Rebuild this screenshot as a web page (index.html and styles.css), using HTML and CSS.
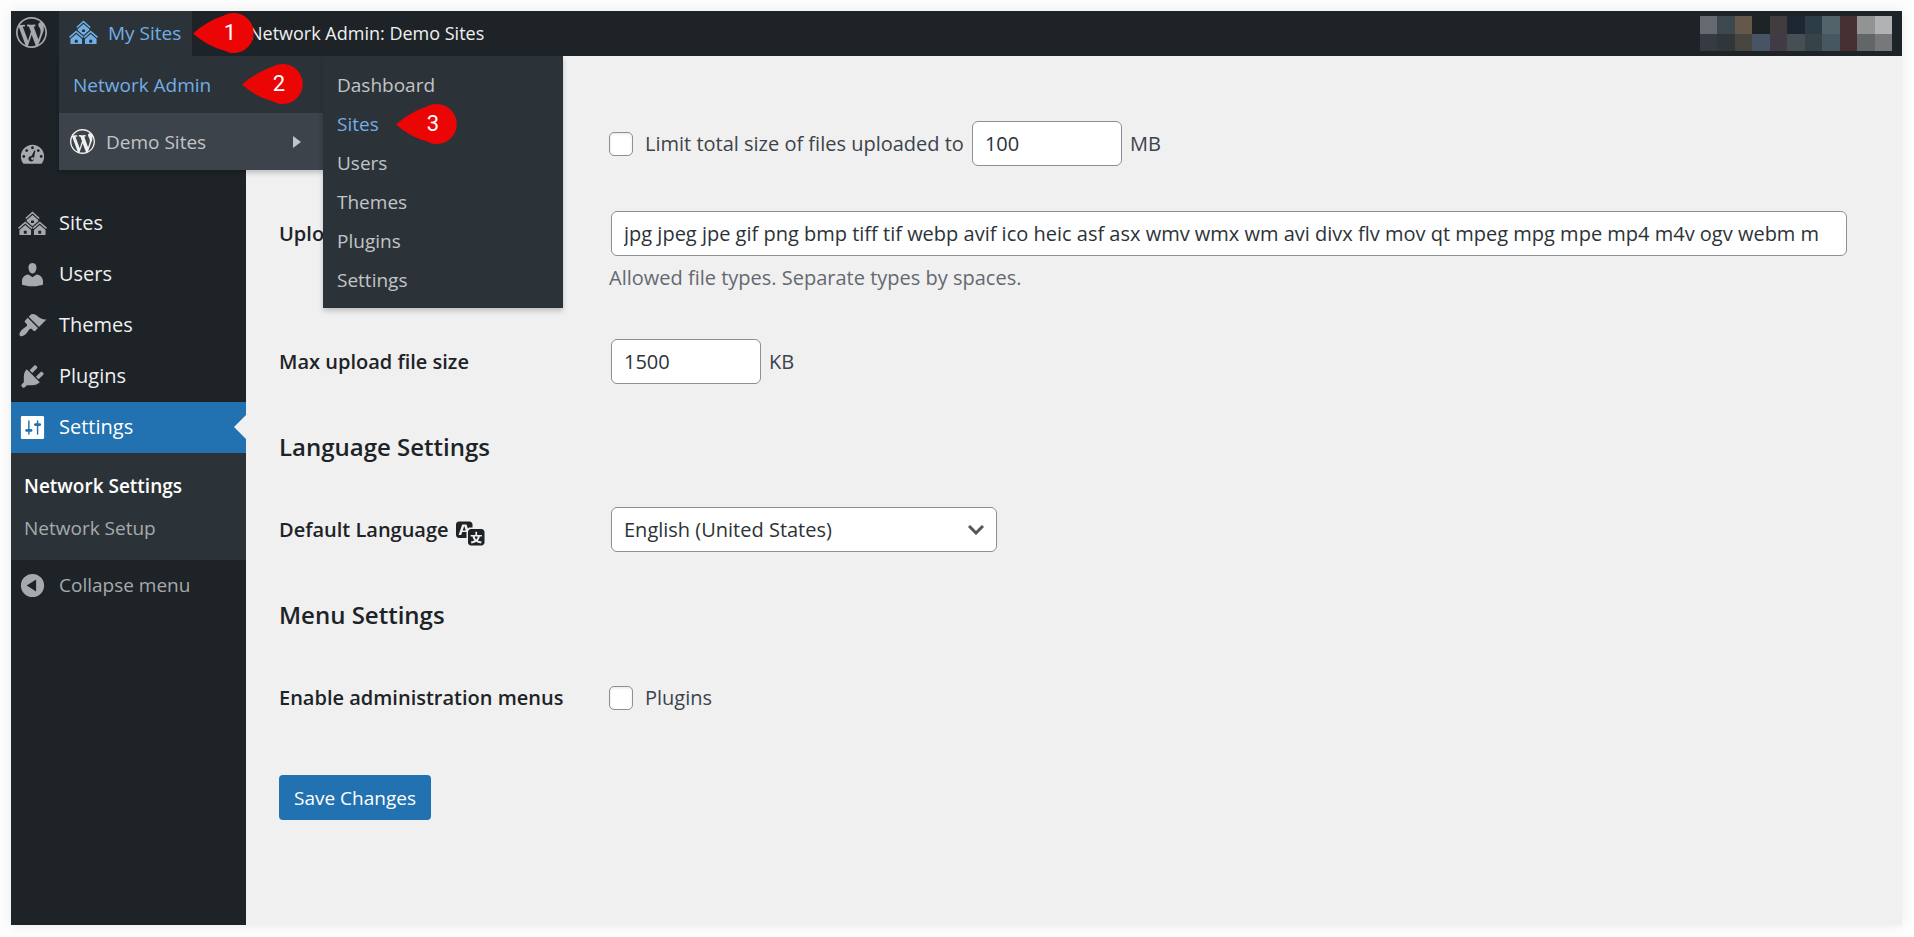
FILE: index.html
```
<!DOCTYPE html>
<html lang="en">
<head>
<meta charset="utf-8">
<title>Network Settings</title>
<link rel="stylesheet" href="styles.css">
</head>
<body>
<svg class="defs" aria-hidden="true">
  <symbol id="i-wp" viewBox="0 0 20 20"><path d="M20 10c0-5.510-4.490-10-10-10C4.480 0 0 4.490 0 10c0 5.520 4.480 10 10 10 5.510 0 10-4.480 10-10zM7.780 15.370L4.370 6.220c.550-.020 1.170-.080 1.170-.080.500-.060.440-1.130-.060-1.110 0 0-1.450.110-2.370.110-.180 0-.370 0-.580-.010C4.120 2.690 6.870 1.110 10 1.110c2.330 0 4.450.870 6.050 2.340-.680-.110-1.650.390-1.650 1.580 0 .740.450 1.360.900 2.100.350.610.550 1.360.550 2.460 0 1.490-1.400 5-1.400 5l-3.030-8.370c.540-.020.820-.170.820-.170.500-.050.440-1.250-.060-1.220 0 0-1.440.120-2.380.120-.870 0-2.330-.120-2.330-.120-.500-.030-.560 1.200-.060 1.220l.920.080 1.260 3.410zM17.410 10c.240-.640.740-1.870.430-4.250.700 1.290 1.050 2.710 1.050 4.250 0 3.290-1.730 6.240-4.400 7.780.970-2.590 1.940-5.200 2.920-7.780zM6.100 18.090C3.120 16.650 1.110 13.530 1.110 10c0-1.300.230-2.480.720-3.590C3.250 10.300 4.670 14.200 6.100 18.090zm4.030-6.630l2.580 6.980c-.860.290-1.760.450-2.710.450-.790 0-1.570-.110-2.290-.330.810-2.380 1.620-4.740 2.420-7.100z"/></symbol>
  <symbol id="i-sites" viewBox="0 0 20 20"><path d="M14.270 6.870L10 3.140 5.730 6.870 5 6.140l5-4.380 5 4.380zM14 8.420l-4.050 3.430L6 8.380v-.740l4-3.500 4 3.500v.780zM11 9.700V8H9v1.700h2zm-1.730 4.030L5 10 .730 13.730 0 13l5-4.380L10 13zm10 0L15 10l-4.270 3.730L10 13l5-4.380L20 13zM5 11l4 3.500V18H1v-3.500zm10 0l4 3.500V18h-8v-3.500zm-9 6v-2H4v2h2zm10 0v-2h-2v2h2z"/></symbol>
  <symbol id="i-dash" viewBox="0 0 20 20"><path d="M3.760 17h12.480c1.100-1.370 1.760-3.110 1.760-5 0-4.420-3.580-8-8-8s-8 3.580-8 8c0 1.890.660 3.630 1.760 5zM10 5c.550 0 1 .450 1 1s-.450 1-1 1-1-.450-1-1 .450-1 1-1zM6 7c.550 0 1 .450 1 1s-.450 1-1 1-1-.450-1-1 .450-1 1-1zm8 0c.550 0 1 .450 1 1s-.450 1-1 1-1-.450-1-1 .450-1 1-1zm-2.630.750l.630.370-1 5.140c.030.100 0 .240 0 .340 0 1.050-.860 1.900-1.920 1.900-1.050 0-1.900-.850-1.900-1.900s.850-1.900 1.900-1.900h.200zM4 11c.550 0 1 .450 1 1s-.450 1-1 1-1-.450-1-1 .450-1 1-1zm12 0c.550 0 1 .450 1 1s-.450 1-1 1-1-.450-1-1 .450-1 1-1zm-6 3.500c.550 0 1-.450 1-1s-.450-1-1-1-1 .450-1 1 .450 1 1 1z"/></symbol>
  <symbol id="i-user" viewBox="0 0 20 20"><path d="M10 9.250c-2.270 0-2.730-3.440-2.730-3.440C7 4.020 7.820 2 9.970 2c2.160 0 2.980 2.020 2.710 3.810 0 0-.410 3.440-2.680 3.440zm0 2.570L12.720 10c2.390 0 4.520 2.330 4.520 4.530v2.490s-3.650 1.130-7.240 1.130c-3.650 0-7.240-1.130-7.240-1.130v-2.490c0-2.250 1.940-4.480 4.470-4.480z"/></symbol>
  <symbol id="i-theme" viewBox="0 0 20 20"><path d="M14.480 11.060L7.410 3.990l1.500-1.500c.500-.560 2.300-.470 3.510.320 1.210.800 1.430 1.280 2.910 2.100 1.180.640 2.450 1.260 4.450.850zm-.710.710L6.700 4.700 4.930 6.470c-.390.390-.390 1.020 0 1.410l1.060 1.060c.390.390.390 1.030 0 1.420-.600.600-1.430 1.110-2.210 1.690-.350.260-.700.530-1.010.840C1.430 14.230.400 16.080 1.400 17.070c.990 1 2.840-.030 4.180-1.360.310-.310.580-.660.850-1.020.570-.780 1.080-1.610 1.690-2.210.390-.390 1.020-.390 1.410 0l1.060 1.060c.390.390 1.020.390 1.410 0z"/></symbol>
  <symbol id="i-plug" viewBox="0 0 20 20"><path d="M13.110 4.360L9.870 7.600 8 5.730l3.240-3.240c.350-.340 1.050-.200 1.560.320.520.510.660 1.210.310 1.550zm-8 1.770l.910-1.120 9.010 9.010-1.190.840c-.710.710-2.630 1.160-3.820 1.160H6.140L4.900 17.260c-.590.590-1.540.590-2.120 0-.590-.580-.590-1.530 0-2.120l1.240-1.240v-3.880c0-1.130.400-3.190 1.090-3.890zm7.260 3.970l3.240-3.240c.340-.350 1.040-.210 1.550.310.520.510.660 1.210.310 1.550l-3.240 3.250z"/></symbol>
  <symbol id="i-set" viewBox="0 0 20 20"><path d="M18 17V3c0-.600-.400-1-1-1H3c-.600 0-1 .400-1 1v14c0 .600.400 1 1 1h14c.600 0 1-.400 1-1zM8 11h1c.550 0 1 .450 1 1s-.450 1-1 1H8v1.500c0 .280-.220.500-.500.500s-.500-.220-.500-.500V13H6c-.550 0-1-.450-1-1s.450-1 1-1h1V5.500c0-.280.220-.500.500-.500s.500.220.500.500V11zm5-2h-1c-.550 0-1-.450-1-1s.450-1 1-1h1V5.500c0-.280.220-.500.500-.500s.500.220.500.500V7h1c.550 0 1 .450 1 1s-.450 1-1 1h-1v5.500c0 .280-.220.500-.500.500s-.500-.220-.500-.500V9z"/></symbol>
  <symbol id="i-collapse" viewBox="0 0 20 20"><path fill-rule="evenodd" d="M10 2a8 8 0 1 0 0 16 8 8 0 0 0 0-16zM12.500 5.800v8.400L6 10z"/></symbol>
  <symbol id="i-lang" viewBox="0 0 20 20"><path fill-rule="evenodd" d="M11 7H9.490c-.630 0-1.250.300-1.590.700L7 5H4.130l-2.390 7h1.690l.740-2H7v4H2c-1.100 0-2-.900-2-2V5c0-1.100.900-2 2-2h7c1.100 0 2 .900 2 2v2zM6.510 9H4.490l1-2.930zM10 8h7c1.100 0 2 .900 2 2v7c0 1.100-.900 2-2 2h-7c-1.100 0-2-.900-2-2v-7c0-1.100.900-2 2-2zm7.250 5v-1.080h-3.170V9.750h-1.160v2.170H9.750V13h1.280c.110.850.560 1.850 1.280 2.620-.870.360-1.890.620-2.310.620-.010.020.220.970.200 1.460.840 0 2.210-.500 3.280-1.150 1.090.650 2.480 1.150 3.340 1.150-.020-.490.200-1.440.200-1.460-.430 0-1.490-.270-2.380-.630.700-.770 1.140-1.770 1.250-2.610h1.360zm-3.810 1.930c-.500-.460-.850-1.130-1.010-1.930h2.090c-.170.800-.510 1.470-1 1.930z"/></symbol>
  <symbol id="i-pin" viewBox="0 0 62 40"><path d="M0 20.500Q14 8 31 2.500A20 20 0 1 1 31 37.500Q14 33 0 20.500z"/></symbol>
</svg>

<div class="frame">
  <header class="bar">
    <a class="bar-logo" href="#" aria-label="About WordPress"><svg class="logo"><use href="#i-wp"/></svg></a>
    <div class="mysites">
      <a class="mysites-link" href="#"><svg class="icon"><use href="#i-sites"/></svg>My Sites</a>
      <span class="pin pin-1"><svg><use href="#i-pin"/></svg><b>1</b></span>
      <div class="drop">
        <div class="drop-row">
          <a href="#" class="drop-link is-active">Network Admin</a>
          <span class="pin pin-2"><svg><use href="#i-pin"/></svg><b>2</b></span>
        </div>
        <div class="drop-row is-site">
          <a href="#" class="drop-link"><svg class="blavatar"><use href="#i-wp"/></svg>Demo Sites<svg class="caret" viewBox="0 0 8 12"><path d="M0 0l8 6-8 6z"/></svg></a>
        </div>
        <ul class="fly">
          <li><a href="#">Dashboard</a></li>
          <li><a href="#" class="is-active">Sites</a><span class="pin pin-3"><svg><use href="#i-pin"/></svg><b>3</b></span></li>
          <li><a href="#">Users</a></li>
          <li><a href="#">Themes</a></li>
          <li><a href="#">Plugins</a></li>
          <li><a href="#">Settings</a></li>
        </ul>
      </div>
    </div>
    <a class="bar-title" href="#">Network Admin: Demo Sites</a>
    <svg class="mosaic" viewBox="0 0 11 2" preserveAspectRatio="none" shape-rendering="crispEdges" aria-hidden="true">
      <path fill="#656970" d="M0 0h1v1H0z"/><path fill="#3c474e" d="M1 0h1v1H1z"/><path fill="#64584a" d="M2 0h1v1H2z"/><path fill="#1d2324" d="M3 0h1v1H3z"/><path fill="#413c3d" d="M4 0h1v1H4z"/><path fill="#1c2733" d="M5 0h1v1H5z"/><path fill="#2e3d45" d="M6 0h1v1H6z"/><path fill="#526469" d="M7 0h1v1H7z"/><path fill="#463033" d="M8 0h1v2H8z"/><path fill="#929393" d="M9 0h1v1H9z"/><path fill="#b1b2b4" d="M10 0h1v1h-1z"/>
      <path fill="#363b43" d="M0 1h1v1H0z"/><path fill="#30363a" d="M1 1h1v1H1z"/><path fill="#47453f" d="M2 1h1v1H2z"/><path fill="#465463" d="M3 1h1v1H3z"/><path fill="#423b45" d="M4 1h1v1H4z"/><path fill="#464f53" d="M5 1h1v1H5z"/><path fill="#36444a" d="M6 1h1v1H6z"/><path fill="#465760" d="M7 1h1v1H7z"/><path fill="#636667" d="M9 1h1v1H9z"/><path fill="#76787b" d="M10 1h1v1h-1z"/>
    </svg>
  </header>
  <div class="body">
    <nav class="side">
      <a class="item item-dash" href="#" aria-label="Dashboard"><svg class="icon"><use href="#i-dash"/></svg></a>
      <a class="item" href="#"><svg class="icon"><use href="#i-sites"/></svg>Sites</a>
      <a class="item" href="#"><svg class="icon"><use href="#i-user"/></svg>Users</a>
      <a class="item" href="#"><svg class="icon"><use href="#i-theme"/></svg>Themes</a>
      <a class="item" href="#"><svg class="icon"><use href="#i-plug"/></svg>Plugins</a>
      <a class="item is-current" href="#"><svg class="icon"><use href="#i-set"/></svg>Settings</a>
      <div class="sub">
        <a href="#" class="is-current">Network Settings</a>
        <a href="#">Network Setup</a>
      </div>
      <button type="button" class="item collapse"><svg class="icon"><use href="#i-collapse"/></svg>Collapse menu</button>
    </nav>
    <main class="main">
      <form>
        <div class="row first">
          <div class="label"></div>
          <div class="field quota">
            <input type="checkbox" id="limit" class="check"><label for="limit">Limit total size of files uploaded to</label>
            <input type="text" class="text short" value="100" aria-label="Size in megabytes"><span>MB</span>
          </div>
        </div>
        <div class="row">
          <label class="label" for="types">Upload file types</label>
          <div class="field">
            <div class="inset"><input type="text" id="types" class="text" value="jpg jpeg jpe gif png bmp tiff tif webp avif ico heic asf asx wmv wmx wm avi divx flv mov qt mpeg mpg mpe mp4 m4v ogv webm m"></div>
            <p class="hint">Allowed file types. Separate types by spaces.</p>
          </div>
        </div>
        <div class="row">
          <label class="label" for="max">Max upload file size</label>
          <div class="field inset"><input type="text" id="max" class="text short" value="1500"><span>KB</span></div>
        </div>
        <h2>Language Settings</h2>
        <div class="row">
          <label class="label" for="lang">Default Language <svg class="lang"><use href="#i-lang"/></svg></label>
          <div class="field inset">
            <span class="select"><select id="lang"><option>English (United States)</option></select><svg viewBox="0 0 16 10"><path d="M1 1l7 7 7-7"/></svg></span>
          </div>
        </div>
        <h2>Menu Settings</h2>
        <div class="row last">
          <div class="label">Enable administration menus</div>
          <div class="field"><input type="checkbox" id="plugins" class="check"><label for="plugins">Plugins</label></div>
        </div>
        <button type="submit" class="save">Save Changes</button>
      </form>
    </main>
  </div>
</div>
</body>
</html>
```
FILE: styles.css
```
* { box-sizing: border-box; }

body {
  margin: 0;
  min-height: 100vh;
  display: flex;
  padding: 11px 12px 12px 11px;
  background: #fdfdfd;
  color: #3c434a;
  font-family: "Segoe UI", "Open Sans", "Noto Sans", sans-serif;
  font-size: 19px;
  line-height: 28px;
}

a { color: inherit; text-decoration: none; }
svg { display: block; fill: currentColor; flex: none; }
ul { list-style: none; margin: 0; padding: 0; }
input, select, button { font: inherit; color: inherit; margin: 0; }
.defs { position: absolute; width: 0; height: 0; }

.frame {
  flex: 1;
  min-width: 0;
  display: flex;
  flex-direction: column;
  background: #f0f0f0;
  box-shadow: 0 0 12px rgba(0, 0, 0, 0.08);
}

.bar {
  display: flex;
  align-items: center;
  height: 45px;
  padding-right: 10px;
  background: #1d2327;
  color: #f0f0f1;
}
.bar-logo { width: 48px; padding: 0 0 2px 5px; color: #a7aaad; }
.logo { width: 31px; height: 31px; }
.icon { width: 29px; height: 29px; }
.mysites { position: relative; }
.mysites-link {
  display: flex;
  align-items: center;
  gap: 10px;
  height: 45px;
  width: 133px;
  padding: 0 0 2px 10px;
  background: #2c3338;
  color: #72aee6;
  white-space: nowrap;
}
.bar-title { margin-left: 57px; padding-bottom: 2px; font-size: 18px; white-space: nowrap; }
.mosaic { width: 192px; height: 35px; margin-left: auto; }

.drop {
  position: absolute;
  z-index: 2;
  top: 100%;
  left: 0;
  width: 264px;
  background: #2c3338;
  color: #c3c4c7;
  box-shadow: 0 3px 5px rgba(0, 0, 0, 0.2);
}
.drop-row { position: relative; height: 57px; }
.drop-row.is-site { background: #3c434a; }
.drop-link { display: flex; align-items: center; height: 100%; padding: 0 22px 0 14px; }
.is-site .drop-link { padding-left: 11px; }
.is-active { color: #72aee6; }
.blavatar { width: 25px; height: 25px; margin-right: 11px; color: #f0f0f1; }
.caret { width: 8px; height: 12px; margin-left: auto; }
.fly {
  position: absolute;
  top: 0;
  left: 100%;
  width: 240px;
  padding: 10px 0 8px;
  background: #2c3338;
  box-shadow: 0 3px 5px rgba(0, 0, 0, 0.2);
}
.fly li { position: relative; }
.fly a { display: block; padding: 0 14px; line-height: 39px; }

.pin { position: absolute; z-index: 3; width: 62px; height: 40px; color: #eb0505; }
.pin svg { width: 62px; height: 40px; }
.pin b {
  position: absolute;
  inset: 0 0 0 12px;
  color: #fff;
  font-family: Roboto, sans-serif;
  font-weight: 400;
  font-size: 22px;
  line-height: 40px;
  text-align: center;
}
.pin-1 { top: 2px; left: 134px; }
.pin-2 { top: 8px; left: 183px; }
.pin-3 { top: -1px; left: 73px; }

.body { flex: 1; display: flex; }
.side { flex: none; width: 235px; padding-top: 72px; background: #1d2327; color: #f0f0f1; }
.item {
  position: relative;
  display: flex;
  align-items: center;
  gap: 12px;
  width: 100%;
  height: 51px;
  padding: 0 8px 1px 7px;
  font-size: 20px;
}
.item .icon { color: #a7aaad; }
.item-dash { margin-bottom: 19px; }
.item.is-current { background: #2271b1; color: #fff; }
.item.is-current .icon { color: #fff; }
.item.is-current::after {
  content: "";
  position: absolute;
  right: 0;
  top: 13px;
  border: 12px solid transparent;
  border-left-width: 0;
  border-right-color: #f0f0f0;
}
.sub { padding: 12px 13px 11px; background: #2c3338; color: #a7aaad; }
.sub a { display: block; line-height: 42px; }
.sub .is-current { color: #fff; font-weight: 600; }
.item.collapse { border: 0; background: none; color: #a7aaad; font-size: 19px; text-align: left; }

.main { flex: 1; min-width: 0; padding: 65px 55px 20px 33px; font-size: 20px; }
.row { display: flex; margin-bottom: 47px; min-height: 45px; }
.row.first { margin-bottom: 45px; }
.row.last { margin-bottom: 55px; }
.label { flex: none; width: 330px; line-height: 45px; color: #1d2327; font-weight: 600; }
.lang { display: inline-block; width: 30px; height: 30px; margin-left: 2px; vertical-align: middle; }
.field { flex: 1; min-width: 0; min-height: 45px; display: flex; flex-wrap: wrap; align-items: center; }
.inset { padding-left: 2px; }
div.inset:not(.field) { width: 100%; }
.check {
  appearance: none;
  width: 24px;
  height: 24px;
  margin-right: 12px;
  border: 1px solid #8c8f94;
  border-radius: 5px;
  background: #fff;
  box-shadow: inset 0 1px 3px rgba(0, 0, 0, 0.1);
}
.text, .select select {
  display: block;
  width: 100%;
  height: 45px;
  padding: 0 12px;
  border: 1px solid #8c8f94;
  border-radius: 6px;
  background: #fff;
  color: #2c3338;
}
.text.short { width: 150px; margin-right: 8px; }
.quota .short { margin-left: 8px; }
.hint { margin: 8px 0 0; color: #646970; }
.select { position: relative; width: 386px; }
.select select { appearance: none; }
.select svg { position: absolute; right: 13px; top: 18px; width: 16px; height: 10px; fill: none; stroke: #50575e; stroke-width: 3; pointer-events: none; }
h2 { margin: 0 0 44px; color: #1d2327; font-size: 24px; line-height: 32px; font-weight: 600; }
.save {
  height: 45px;
  padding: 0 15px;
  border: 0;
  border-radius: 4px;
  background: #2271b1;
  color: #fff;
  font-size: 19px;
}
```
